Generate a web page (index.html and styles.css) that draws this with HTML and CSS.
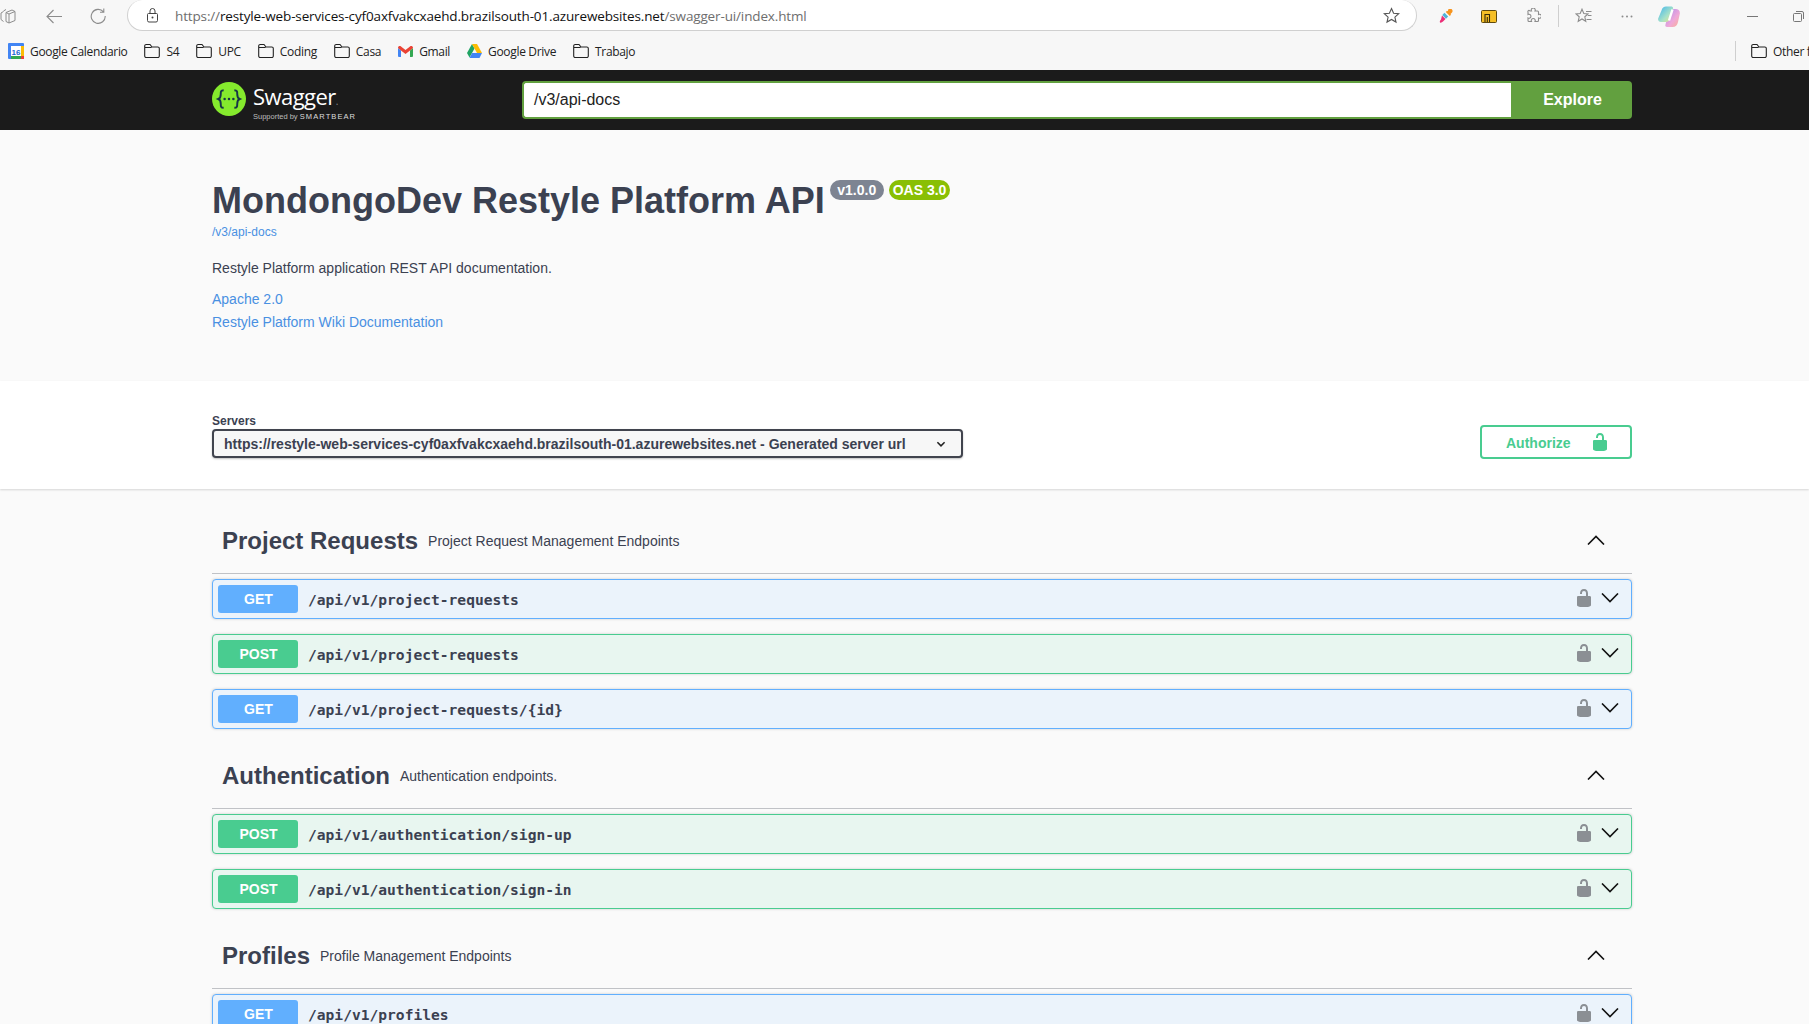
FILE: index.html
```html
<!DOCTYPE html>
<html lang="en">
<head>
    <meta charset="UTF-8">
    <meta name="viewport" content="width=device-width, initial-scale=1.0">
    <title>Swagger UI</title>
    <link rel="stylesheet" href="styles.css">
</head>
<body>
    <svg class="defs" width="0" height="0">
        <symbol id="folder" viewBox="0 0 16 16">
            <path d="M.7 4.500V3A1.500 1.500 0 0 1 2.200 1.500H6L8 4h5.800a1.500 1.500 0 0 1 1.500 1.500v7.500a1.500 1.500 0 0 1-1.500 1.500H2.200A1.500 1.500 0 0 1 .7 13zM.7 4.500H7.500" fill="none" stroke="#222" stroke-width="1.100"/>
        </symbol>
        <symbol id="lock" viewBox="0 0 20 20">
            <path d="M15.800 8H14V5.600C14 2.703 12.665 1 10 1 7.334 1 6 2.703 6 5.600V6h2v-.801C8 3.754 8.797 3 10 3c1.203 0 2 .754 2 2.199V8H4c-.553 0-1 .646-1 1.199V17c0 .549.428 1.139.951 1.307l1.197.387C5.672 18.861 6.550 19 7.100 19h5.800c.549 0 1.428-.139 1.951-.307l1.196-.387c.524-.167.953-.757.953-1.306V9.199C17 8.646 16.352 8 15.800 8z"/>
        </symbol>
        <symbol id="arrow-down" viewBox="0 0 18 10">
            <path d="M1 .5l8 8 8-8" fill="none" stroke="#111" stroke-width="1.600"/>
        </symbol>
        <symbol id="arrow-up" viewBox="0 0 18 10">
            <path d="M1 9.500l8-8 8 8" fill="none" stroke="#111" stroke-width="1.600"/>
        </symbol>
    </svg>

    <div class="browser">
        <div class="toolbar">
            <svg class="tb-icon tabs" width="16" height="16" viewBox="0 0 16 16"><path d="M6 4.500l6-2.500 3 1.500v9l-6 2.500-3-1.500zM6 4.500l3 1.500 6-2.500M9 6v9M3.500 3.500L1 5v6.500l2.500 2M6 1.500L3.500 3" fill="none" stroke="#8c8c8c" stroke-width="1"/></svg>
            <svg class="tb-icon back" width="16" height="15" viewBox="0 0 16 15"><path d="M7.500 1 1 7.500 7.500 14M1 7.500h15" fill="none" stroke="#8c8c8c" stroke-width="1.100"/></svg>
            <svg class="tb-icon reload" width="16" height="16" viewBox="0 0 16 16"><path d="M13.500 3.800A7 7 0 1 0 15.200 8M13.800 .5v3.800H10" fill="none" stroke="#8c8c8c" stroke-width="1.100"/></svg>
            <div class="address">
                <svg class="addr-lock" width="11" height="15" viewBox="0 0 11 15"><path d="M3 5.500V3a2.500 2.500 0 0 1 5 0v2.500M1.500 5.500h8a1 1 0 0 1 1 1v6a1.500 1.500 0 0 1-1.500 1.500H2a1.500 1.500 0 0 1-1.500-1.500v-6a1 1 0 0 1 1-1z" fill="none" stroke="#444" stroke-width="1"/><circle cx="5.500" cy="9.500" r="1" fill="#444"/></svg>
                <span class="url"><span class="url-dim">https://</span>restyle-web-services-cyf0axfvakcxaehd.brazilsouth-01.azurewebsites.net<span class="url-dim">/swagger-ui/index.html</span></span>
                <svg class="addr-star" width="17" height="17" viewBox="0 0 17 17"><path d="m8.500 1.500 2.100 4.700 5.100.5-3.800 3.400 1.100 5-4.500-2.600L4 15.100l1.100-5L1.300 6.700l5.100-.5z" fill="none" stroke="#555" stroke-width="1.100"/></svg>
            </div>
            <svg class="tb-icon dropper" width="14" height="14" viewBox="0 0 14 14"><path d="M9.500 0a2.500 2.500 0 0 1 3.500 3.500l-1.500 1.500 .5 .8-1.200 1.200-4-4 1.200-1.200 .8 .5z" fill="#f7941d"/><path d="M5.500 3.800l3.700 3.700-2.200 2.300-3.700-3.700z" fill="#4fb3d9"/><path d="M3 6.500l3.500 3.500-2.500 2.500c-1 1-2 1.500-3 1-.5-1 0-2 1-3z" fill="#ec2f78"/></svg>
            <svg class="tb-icon yellow" width="16" height="13" viewBox="0 0 16 13"><rect x=".5" y=".5" width="15" height="12" rx="1" fill="#f6bf26" stroke="#5f4a0e"/><path d="M4 12V4.500h4.500V12M6.300 12V7" fill="none" stroke="#3a2d08" stroke-width="1.100"/></svg>
            <svg class="tb-icon puzzle" width="16" height="16" viewBox="0 0 16 16"><path d="M5 3h1.500a2 2 0 1 1 3.500 0h2.500a1 1 0 0 1 1 1v2.500a2 2 0 1 1 0 3.500v2.500a1 1 0 0 1-1 1h-2.500a2 2 0 1 0-3.500 0H4a1 1 0 0 1-1-1v-2.500a2 2 0 1 0 0-3.500V4a1 1 0 0 1 2-1z" fill="none" stroke="#8c8c8c" stroke-width="1.100"/></svg>
            <div class="tb-sep"></div>
            <svg class="tb-icon favs" width="17" height="16" viewBox="0 0 17 16"><path d="M7 1.200l1.800 4.300 4.200.4-3.200 2.900 1 4.500L7 11 3.200 13.300l1-4.500L1 5.900l4.200-.4zM11 3.500h5.500M12.800 7.500h3.700M11.500 11.500h5" fill="none" stroke="#8c8c8c" stroke-width="1.100"/></svg>
            <svg class="tb-icon dots" width="12" height="3" viewBox="0 0 12 3"><circle cx="1.500" cy="1.500" r="1" fill="#8c8c8c"/><circle cx="6" cy="1.500" r="1" fill="#8c8c8c"/><circle cx="10.500" cy="1.500" r="1" fill="#8c8c8c"/></svg>
            <svg class="tb-icon copilot" width="22" height="21" viewBox="0 0 22 21">
                <defs>
                    <linearGradient id="cop-a" x1="0" y1="0" x2="1" y2="1"><stop offset="0" stop-color="#3fb5ee"/><stop offset=".6" stop-color="#a8e2c8"/><stop offset="1" stop-color="#f4e27c"/></linearGradient>
                    <linearGradient id="cop-b" x1="0" y1="0" x2="1" y2="1"><stop offset="0" stop-color="#a98cf0"/><stop offset=".6" stop-color="#f0a8d8"/><stop offset="1" stop-color="#f8b090"/></linearGradient>
                </defs>
                <path d="M14 3h3.500c3 0 4.800 2 4.300 4.800L20 16c-.5 3-2.500 5-5.500 5H9c-1.500 0-2-1-1.500-2.500L10 9c.5-3 2-6 4-6z" fill="url(#cop-b)"/>
                <path d="M8 .5h5c1.500 0 2.500 1 2 2.500l-3 9c-.5 2-1.500 4-4.500 4H3c-2 0-3.300-1.500-2.800-3.500L3.500 4.500C4 2 6 .5 8 .5z" fill="url(#cop-a)"/>
                <path d="M14.500 3.500 11 14.500" stroke="#fff" stroke-width="2.400"/>
            </svg>
            <div class="tb-min"></div>
            <svg class="tb-icon restore" width="11" height="11" viewBox="0 0 11 11"><path d="M3 .5h6a1.500 1.500 0 0 1 1.500 1.500v6M1.500 2.500h6a1 1 0 0 1 1 1v6a1 1 0 0 1-1 1h-6a1 1 0 0 1-1-1v-6a1 1 0 0 1 1-1z" fill="none" stroke="#777" stroke-width="1"/></svg>
        </div>
        <div class="bookmarks">
            <div class="bm">
                <svg width="16" height="16" viewBox="0 0 16 16"><rect width="16" height="16" rx="1" fill="#4285f4"/><rect x="3" y="3" width="10" height="10" fill="#fff"/><rect x="13" y="3" width="3" height="10" fill="#fbbc04"/><rect x="3" y="13" width="13" height="3" fill="#34a853"/><rect x="13" y="13" width="3" height="3" fill="#ea4335"/><text class="cal-day" x="8" y="11.500" text-anchor="middle">16</text></svg>
                Google Calendario
            </div>
            <div class="bm"><svg width="16" height="16"><use href="#folder"/></svg>S4</div>
            <div class="bm"><svg width="16" height="16"><use href="#folder"/></svg>UPC</div>
            <div class="bm"><svg width="16" height="16"><use href="#folder"/></svg>Coding</div>
            <div class="bm"><svg width="16" height="16"><use href="#folder"/></svg>Casa</div>
            <div class="bm">
                <svg width="15" height="11" viewBox="0 0 15 11"><path d="M0 2v8a1 1 0 0 0 1 1h2V4.500z" fill="#4285f4"/><path d="M15 2v8a1 1 0 0 1-1 1h-2V4.500z" fill="#34a853"/><path d="M0 2l3 2.500 4.500 3.500L12 4.500 15 2c0-2-2-2.500-3-1.500L7.500 4 3 .5C2-.5 0 0 0 2z" fill="#ea4335"/></svg>
                Gmail
            </div>
            <div class="bm">
                <svg width="15" height="14" viewBox="0 0 15 14"><path d="M5 0 0 9l2.500 4.500 5-9z" fill="#1fa463"/><path d="M5 0h5l5 9h-5z" fill="#fbbc04"/><path d="M2.500 14 5 9h10l-2.500 5z" fill="#4285f4"/></svg>
                Google Drive
            </div>
            <div class="bm"><svg width="16" height="16"><use href="#folder"/></svg>Trabajo</div>
            <div class="bm-sep"></div>
            <div class="bm bm-other"><svg width="16" height="16"><use href="#folder"/></svg>Other favorites</div>
        </div>
    </div>

    <div class="topbar">
        <div class="wrapper topbar-row">
            <div class="logo">
                <svg class="logo-mark" width="34" height="34" viewBox="0 0 35 35">
                    <circle cx="17.500" cy="17.500" r="17.500" fill="#85ea2d"/>
                    <path d="M12 8.500c-3 0-3 1.500-3 4s0 4-2.500 5c2.500 1 2.500 2.500 2.500 5s0 4 3 4M23 8.500c3 0 3 1.500 3 4s0 4 2.500 5c-2.500 1-2.500 2.500-2.500 5s0 4-3 4" fill="none" stroke="#173647" stroke-width="2"/>
                    <circle cx="13" cy="17.500" r="1.300" fill="#173647"/><circle cx="17.500" cy="17.500" r="1.300" fill="#173647"/><circle cx="22" cy="17.500" r="1.300" fill="#173647"/>
                </svg>
                <div class="logo-text">
                    <div class="logo-name">Swagger<span class="logo-dot">.</span></div>
                    <div class="logo-sub">Supported by <b>SMARTBEAR</b></div>
                </div>
            </div>
            <div class="explore">
                <div class="explore-input">/v3/api-docs</div>
                <div class="explore-btn">Explore</div>
            </div>
        </div>
    </div>

    <div class="info">
        <div class="wrapper">
            <div class="title-row">
                <h1>MondongoDev Restyle Platform API</h1>
                <span class="badge badge-version">v1.0.0</span>
                <span class="badge badge-oas">OAS 3.0</span>
            </div>
            <a class="spec-link">/v3/api-docs</a>
            <p class="desc">Restyle Platform application REST API documentation.</p>
            <a class="info-link first">Apache 2.0</a>
            <a class="info-link">Restyle Platform Wiki Documentation</a>
        </div>
    </div>

    <div class="scheme">
        <div class="wrapper scheme-row">
            <div class="servers">
                <div class="servers-label">Servers</div>
                <div class="select">
                    https://restyle-web-services-cyf0axfvakcxaehd.brazilsouth-01.azurewebsites.net - Generated server url
                    <svg width="12" height="12" viewBox="0 0 20 20"><path d="M4 7l6 6 6-6" fill="none" stroke="#222" stroke-width="2.600"/></svg>
                </div>
            </div>
            <div class="authorize">
                <span class="authorize-text">Authorize</span>
                <svg width="20" height="20"><use href="#lock"/></svg>
            </div>
        </div>
    </div>

    <div class="wrapper operations">
        <div class="tag">
            <div class="tag-name">Project Requests</div>
            <div class="tag-desc">Project Request Management Endpoints</div>
            <svg class="tag-arrow" width="18" height="10"><use href="#arrow-up"/></svg>
        </div>
        <div class="op op-get">
            <span class="method">GET</span><span class="path">/api/v1/project-requests</span>
            <svg class="op-lock" width="20" height="20"><use href="#lock"/></svg>
            <svg class="op-arrow" width="18" height="10"><use href="#arrow-down"/></svg>
        </div>
        <div class="op op-post">
            <span class="method">POST</span><span class="path">/api/v1/project-requests</span>
            <svg class="op-lock" width="20" height="20"><use href="#lock"/></svg>
            <svg class="op-arrow" width="18" height="10"><use href="#arrow-down"/></svg>
        </div>
        <div class="op op-get">
            <span class="method">GET</span><span class="path">/api/v1/project-requests/{id}</span>
            <svg class="op-lock" width="20" height="20"><use href="#lock"/></svg>
            <svg class="op-arrow" width="18" height="10"><use href="#arrow-down"/></svg>
        </div>

        <div class="tag">
            <div class="tag-name">Authentication</div>
            <div class="tag-desc">Authentication endpoints.</div>
            <svg class="tag-arrow" width="18" height="10"><use href="#arrow-up"/></svg>
        </div>
        <div class="op op-post">
            <span class="method">POST</span><span class="path">/api/v1/authentication/sign-up</span>
            <svg class="op-lock" width="20" height="20"><use href="#lock"/></svg>
            <svg class="op-arrow" width="18" height="10"><use href="#arrow-down"/></svg>
        </div>
        <div class="op op-post">
            <span class="method">POST</span><span class="path">/api/v1/authentication/sign-in</span>
            <svg class="op-lock" width="20" height="20"><use href="#lock"/></svg>
            <svg class="op-arrow" width="18" height="10"><use href="#arrow-down"/></svg>
        </div>

        <div class="tag">
            <div class="tag-name">Profiles</div>
            <div class="tag-desc">Profile Management Endpoints</div>
            <svg class="tag-arrow" width="18" height="10"><use href="#arrow-up"/></svg>
        </div>
        <div class="op op-get">
            <span class="method">GET</span><span class="path">/api/v1/profiles</span>
            <svg class="op-lock" width="20" height="20"><use href="#lock"/></svg>
            <svg class="op-arrow" width="18" height="10"><use href="#arrow-down"/></svg>
        </div>
    </div>
</body>
</html>
```

FILE: styles.css
```css
html {
    overflow: hidden;
    height: 100%;
}
body {
    margin: 0;
    height: 1024px;
    overflow: hidden;
    background-color: #fafafa;
    color: #3b4151;
    font-family: "Liberation Sans", Arial, sans-serif;
}
.defs {
    display: block;
    height: 0;
}
.wrapper {
    width: 1420px;
    margin-left: 212px;
}

/* browser chrome */
.browser {
    height: 70px;
    background-color: #f7f7f7;
    overflow: hidden;
}
.toolbar {
    height: 32px;
    display: flex;
    align-items: center;
}
.tb-icon {
    flex: none;
}
.back {
    margin-left: 30px;
}
.reload {
    margin-left: 28px;
}
.address {
    width: 1290px;
    height: 31px;
    margin-left: 21px;
    margin-top: -1px;
    box-sizing: border-box;
    display: flex;
    align-items: center;
    background-color: #fff;
    border: 1px solid #d0d0d0;
    border-top: none;
    border-radius: 16px;
}
.addr-lock {
    margin-left: 19px;
}
.url {
    margin-left: 17px;
    padding-top: 1px;
    font-family: "Open Sans", sans-serif;
    font-size: 13.500px;
    letter-spacing: -0.14px;
    color: #111;
    white-space: nowrap;
}
.url-dim {
    color: #6e6e6e;
}
.addr-star {
    margin-left: auto;
    margin-right: 16px;
}
.dropper {
    margin-left: 22px;
}
.yellow {
    margin-left: 28px;
}
.puzzle {
    margin-left: 28px;
}
.tb-sep {
    width: 1px;
    height: 22px;
    margin-left: 17px;
    background-color: #cfcfcf;
}
.favs {
    margin-left: 16px;
}
.dots {
    margin-left: 29px;
}
.copilot {
    margin-left: 25px;
}
.tb-min {
    width: 11px;
    height: 1px;
    margin-left: 67px;
    background-color: #777;
}
.restore {
    margin-left: 35px;
}
.bookmarks {
    height: 38px;
    padding-left: 8px;
    display: flex;
    align-items: center;
    gap: 17px;
    font-family: "Open Sans", sans-serif;
    font-size: 12px;
    letter-spacing: -0.33px;
    color: #222;
    white-space: nowrap;
}
.bm {
    display: flex;
    align-items: center;
    gap: 6px;
}
.cal-day {
    font-family: "Liberation Sans", sans-serif;
    font-size: 8px;
    font-weight: bold;
    letter-spacing: 0;
    fill: #1967d2;
}
.bm-sep {
    flex: none;
    width: 1px;
    height: 20px;
    margin-left: auto;
    margin-right: -2px;
    background-color: #cfcfcf;
}
.bm-other {
    flex: none;
    width: 58px;
    overflow: hidden;
}
.bm-other svg {
    flex: none;
}

/* swagger top bar */
.topbar {
    height: 60px;
    background-color: #1b1b1b;
}
.topbar-row {
    height: 60px;
    display: flex;
    align-items: center;
}
.logo {
    width: 310px;
    height: 44px;
    padding-top: 4px;
    box-sizing: border-box;
    display: flex;
    align-items: flex-start;
    gap: 7px;
}
.logo-text {
    margin-top: -1px;
}
.logo-name {
    font-family: "Open Sans", sans-serif;
    font-size: 22px;
    letter-spacing: -0.55px;
    line-height: 30px;
    color: #fff;
}
.logo-dot {
    color: #888;
    font-size: 10px;
}
.logo-sub {
    font-size: 7.500px;
    line-height: 9px;
    margin-top: -4px;
    color: #bbb;
    white-space: nowrap;
}
.logo-sub b {
    font-size: 7.500px;
    font-weight: normal;
    letter-spacing: 1.100px;
    color: #ddd;
}
.explore {
    width: 1110px;
    height: 38px;
    display: flex;
}
.explore-input {
    flex: 1;
    box-sizing: border-box;
    padding-left: 10px;
    line-height: 34px;
    background-color: #fff;
    border: 2px solid #62a03f;
    border-right: none;
    border-radius: 4px 0 0 4px;
    font-size: 16px;
    color: #222;
}
.explore-btn {
    width: 121px;
    padding-left: 2px;
    box-sizing: border-box;
    line-height: 38px;
    text-align: center;
    background-color: #62a03f;
    border-radius: 0 4px 4px 0;
    color: #fff;
    font-size: 16px;
    font-weight: bold;
}

/* info block */
.info {
    height: 251px;
    box-sizing: border-box;
    padding-top: 50px;
}
.title-row {
    display: flex;
    align-items: flex-start;
    height: 41px;
}
h1 {
    margin: 0;
    font-size: 36px;
    line-height: 42px;
    font-weight: bold;
    color: #3b4151;
}
.badge {
    padding: 0 4px;
    border-radius: 57px;
    line-height: 20px;
    font-size: 14px;
    font-weight: bold;
    color: #fff;
}
.badge-version {
    margin-left: 5px;
    padding: 0 7.500px;
    background-color: #7d8492;
}
.badge-oas {
    margin-left: 5px;
    background-color: #89bf04;
}
.spec-link {
    display: block;
    margin-top: 4px;
    font-size: 12px;
    line-height: 14px;
    color: #4990e2;
}
.desc {
    margin: 21px 0 0;
    font-size: 14px;
    line-height: 16px;
    color: #3b4151;
}
.info-link {
    display: block;
    margin-top: 7px;
    font-size: 14px;
    line-height: 16px;
    color: #4990e2;
}
.info-link.first {
    margin-top: 15px;
}

/* servers row */
.scheme {
    height: 108px;
    box-sizing: border-box;
    background-color: #fff;
    box-shadow: 0 1px 2px 0 rgba(0, 0, 0, .15);
}
.scheme-row {
    display: flex;
    justify-content: space-between;
    align-items: flex-start;
}
.servers-label {
    margin-top: 33px;
    margin-bottom: 1px;
    font-size: 12px;
    line-height: 14px;
    font-weight: bold;
}
.select {
    width: 751px;
    height: 29px;
    box-sizing: border-box;
    padding: 0 10px;
    display: flex;
    align-items: center;
    justify-content: space-between;
    background-color: #f7f7f7;
    border: 2px solid #41444e;
    border-radius: 4px;
    box-shadow: 0 1px 2px 0 rgba(0, 0, 0, .25);
    font-size: 14px;
    font-weight: bold;
    white-space: nowrap;
}
.select svg {
    margin-right: 4px;
}
.authorize {
    width: 152px;
    height: 34px;
    margin-top: 44px;
    box-sizing: border-box;
    padding-left: 24px;
    display: flex;
    align-items: center;
    gap: 19px;
    border: 2px solid #49cc90;
    border-radius: 4px;
    color: #49cc90;
    font-size: 14px;
    font-weight: bold;
}
.authorize-text {
    padding-top: 2px;
}
.authorize svg {
    fill: #49cc90;
}

/* operations */
.operations {
    margin-top: 20px;
}
.tag {
    height: 64px;
    margin-bottom: 5px;
    padding-left: 10px;
    display: flex;
    align-items: center;
    border-bottom: 1px solid rgba(59, 65, 81, .3);
}
.tag-name {
    font-size: 24px;
    font-weight: bold;
}
.tag-desc {
    margin-left: 10px;
    font-size: 14px;
}
.tag-arrow {
    margin-left: auto;
    margin-right: 27px;
    margin-top: -3px;
}
.op {
    height: 40px;
    box-sizing: border-box;
    margin-bottom: 15px;
    padding: 0 12px 0 5px;
    display: flex;
    align-items: center;
    border: 1px solid;
    border-radius: 4px;
    box-shadow: 0 0 3px rgba(0, 0, 0, .19);
}
.op-get {
    background-color: #ebf3fb;
    border-color: #61affe;
}
.op-post {
    background-color: #e8f6f0;
    border-color: #49cc90;
}
.method {
    width: 80px;
    padding-left: 1px;
    box-sizing: border-box;
    line-height: 28px;
    text-align: center;
    border-radius: 3px;
    color: #fff;
    font-size: 14px;
    font-weight: bold;
}
.op-get .method {
    background-color: #61affe;
}
.op-post .method {
    background-color: #49cc90;
}
.path {
    margin-left: 10px;
    font-family: "DejaVu Sans Mono", monospace;
    font-size: 14.600px;
    font-weight: bold;
    color: #3b4151;
}
.op-lock {
    margin-left: auto;
    margin-top: -3px;
    fill: #8b8f94;
}
.op-arrow {
    margin-left: 7px;
    margin-top: -2px;
}
```
